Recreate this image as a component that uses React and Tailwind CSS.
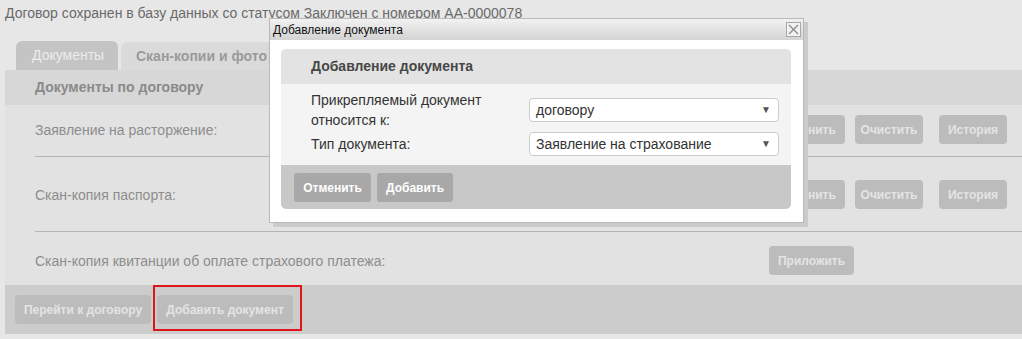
import React from 'react';

const FONT = "font-['Liberation_Sans',Arial,sans-serif]";

// Серая кнопка на затемнённой странице
const PageButton = ({ children, className = '' }) => (
  <button className={`h-[29px] rounded-[4px] bg-[#bcbcbc] text-[12px] font-bold text-[#e4e4e4] ${className}`}>
    {children}
  </button>
);

const DocRow = ({ label, pad, buttons }) => (
  <div className={`flex items-center pl-[30px] ${pad}`}>
    <div className="w-[734px] shrink-0 text-[14px] leading-[20px] text-[#8d8d8d]">{label}</div>
    {buttons}
  </div>
);

const Separator = () => <div className="ml-[30px] border-t border-[#b4b4b4]" />;

const Select = ({ value }) => (
  <div className="flex h-[24px] w-[250px] items-center justify-between rounded-[4px] border border-[#cccccc] bg-white pl-[6px] pr-[7px]">
    <span className="text-[14px] leading-[18px] text-[#333]">{value}</span>
    <span className="text-[10px] leading-none text-[#555]">▼</span>
  </div>
);

const Dialog = () => (
  <div className="absolute left-[269px] top-[18px] h-[205px] w-[535px] border border-[#b9b9b9] bg-white shadow-[4px_4px_0_0_#cbcbcb]">
    <div className="flex h-[21px] items-center justify-between bg-gradient-to-b from-[#f2f2f2] to-[#d3d3d3] pl-[3px] pr-[2px]">
      <span className="text-[12px] leading-[14px] text-[#111]">Добавление документа</span>
      <div className="flex h-[15px] w-[15px] items-center justify-center border border-[#a8a8a8] bg-[#f2f2f2]">
        <svg width="11" height="11" viewBox="0 0 11 11">
          <path d="M1 1L10 10M10 1L1 10" stroke="#8e8e8e" strokeWidth="1.4" />
        </svg>
      </div>
    </div>
    <div className="ml-[11px] mt-[9px] w-[510px]">
      <div className="flex h-[35px] items-center rounded-t-[5px] bg-[#e3e3e3] pl-[30px] text-[14px] font-bold text-[#474747]">
        Добавление документа
      </div>
      <div className="bg-[#f4f4f4] pb-[7px] pl-[30px] pt-[6px]">
        <div className="flex h-[40px] items-center">
          <div className="w-[218px] text-[14px] leading-[20px] text-[#333]">
            Прикрепляемый документ
            <br />
            относится к:
          </div>
          <Select value="договору" />
        </div>
        <div className="flex h-[28px] items-center">
          <div className="w-[218px] text-[14px] leading-[20px] text-[#333]">Тип документа:</div>
          <Select value="Заявление на страхование" />
        </div>
      </div>
      <div className="flex h-[44px] gap-[6px] rounded-b-[5px] bg-[#c8c8c8] pl-[13px] pt-[8px]">
        <button className="h-[29px] w-[77px] rounded-[3px] bg-[#a8a8a8] text-[12px] font-bold text-white">Отменить</button>
        <button className="h-[29px] w-[76px] rounded-[3px] bg-[#a8a8a8] text-[12px] font-bold text-white">Добавить</button>
      </div>
    </div>
  </div>
);

export default function App() {
  const rowButtons = (
    <div className="flex">
      <PageButton className="mr-[10px] w-[76px]">Заменить</PageButton>
      <PageButton className="mr-[16px] w-[68px]">Очистить</PageButton>
      <PageButton className="w-[68px]">История</PageButton>
    </div>
  );

  return (
    <div className={`relative h-[339px] w-full overflow-hidden bg-[#e7e7e7] ${FONT}`}>
      <div className="px-[5px] pt-[4px] text-[14px] leading-[18px] text-[#6a6a6a]">
        Договор сохранен в базу данных со статусом Заключен с номером АА-0000078
      </div>

      {/* Вкладки */}
      <div className="ml-[16px] mt-[19px] flex gap-[3px]">
        <div className="flex h-[29px] w-[102px] items-center rounded-t-[6px] bg-[#c4c4c4] pl-[16px] text-[14px] text-[#ececec]">
          Документы
        </div>
        <div className="mt-[1px] flex h-[28px] w-[165px] items-center rounded-t-[6px] bg-[#dadada] pl-[15px] text-[14px] font-bold text-[#9a9a9a]">
          Скан-копии и фото
        </div>
      </div>

      {/* Панель документов */}
      <div className="ml-[5px]">
        <div className="flex h-[35px] items-center bg-[#d7d7d7] pl-[30px] text-[14px] font-bold text-[#8a8a8a]">
          Документы по договору
        </div>
        <div className="bg-[#e2e2e2]">
          <DocRow label="Заявление на расторжение:" pad="pt-[10px] pb-[12px]" buttons={rowButtons} />
          <Separator />
          <DocRow label="Скан-копия паспорта:" pad="pt-[23px] pb-[22px]" buttons={rowButtons} />
          <Separator />
          <DocRow
            label="Скан-копия квитанции об оплате страхового платежа:"
            pad="pt-[14px] pb-[10px]"
            buttons={<PageButton className="w-[85px]">Приложить</PageButton>}
          />
        </div>
        <div className="flex h-[49px] gap-[6px] bg-[#cccccc] pl-[10px] pt-[10px]">
          <PageButton className="w-[136px]">Перейти к договору</PageButton>
          <div className="relative">
            <PageButton className="w-[136px]">Добавить документ</PageButton>
            <div className="absolute -left-[4px] -top-[10px] h-[46px] w-[149px] border-2 border-[#e0141c]" />
          </div>
        </div>
      </div>

      <Dialog />
    </div>
  );
}
